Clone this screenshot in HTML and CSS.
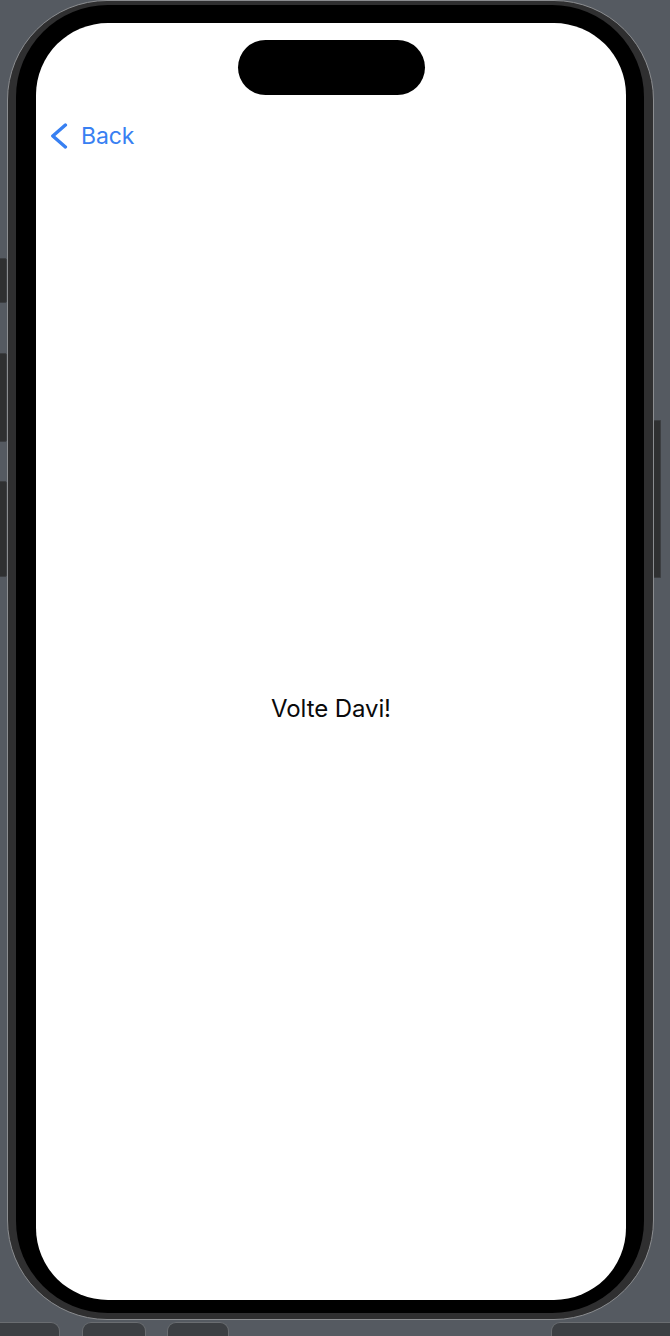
FILE: index.html
```html
<!DOCTYPE html>
<html lang="en">
<head>
<meta charset="utf-8">
<title>Volte Davi</title>
<link rel="stylesheet" href="styles.css">
</head>
<body>
<div class="page">
  <div class="hw hw-left hw-l1"></div>
  <div class="hw hw-left hw-l2"></div>
  <div class="hw hw-left hw-l3"></div>
  <div class="hw hw-right hw-r1"></div>

  <div class="phone">
    <div class="bezel">
      <div class="screen">
        <div class="island"></div>
        <div class="navbar">
          <a class="back" href="#">
            <svg class="chevron" width="18" height="26" viewBox="0 0 18 26" aria-hidden="true">
              <polyline points="15.4,2 2.8,13 15.4,24" fill="none" stroke="#3880f2" stroke-width="3.4" stroke-linecap="round" stroke-linejoin="round"/>
            </svg>
            <span class="back-label">Back</span>
          </a>
        </div>
        <main class="content">
          <p class="message">Volte Davi!</p>
        </main>
      </div>
    </div>
  </div>

  <div class="dock">
    <div class="dock-item dock-a"></div>
    <div class="dock-item dock-b"></div>
    <div class="dock-item dock-c"></div>
    <div class="dock-item dock-d"></div>
  </div>
</div>
</body>
</html>
```

FILE: styles.css
```css
* {
  box-sizing: border-box;
}

html, body {
  margin: 0;
  padding: 0;
}

body {
  background: #555a61;
  font-family: Inter, "Liberation Sans", sans-serif;
}

.page {
  position: relative;
  width: 670px;
  height: 1336px;
  overflow: hidden;
  background: #555a61;
  display: flex;
  flex-direction: column;
}

/* hardware side buttons */
.hw {
  position: absolute;
  background: #2f3031;
  border: 1px solid #3c3e41;
}
.hw-left {
  left: -2px;
  width: 9px;
  border-radius: 0 2px 2px 0;
}
.hw-l1 { top: 258px; height: 45px; }
.hw-l2 { top: 353px; height: 89px; }
.hw-l3 { top: 481px; height: 96px; }
.hw-right {
  left: 653px;
  width: 8px;
  border-radius: 2px 0 0 2px;
}
.hw-r1 { top: 420px; height: 158px; }

/* phone body */
.phone {
  position: relative;
  margin-left: 7px;
  width: 647px;
  height: 1320px;
  flex: none;
  border: 1px solid #8b8d90;
  border-radius: 100px;
  background: #2f2f30;
  padding: 4px 9px 6px 8px;
}

.bezel {
  height: 100%;
  background: #000;
  border-radius: 92px;
  padding: 18px 18px 13px 20px;
}

.screen {
  height: 100%;
  background: #fff;
  border-radius: 72px;
  display: flex;
  flex-direction: column;
  overflow: hidden;
}

.island {
  align-self: center;
  margin-top: 17px;
  width: 187px;
  height: 55px;
  border-radius: 28px;
  background: #000;
  flex: none;
}

.navbar {
  margin-top: 27px;
  height: 28px;
  padding-left: 14px;
  display: flex;
  align-items: center;
  flex: none;
}

.back {
  display: flex;
  align-items: center;
  gap: 13px;
  color: #3880f2;
  text-decoration: none;
}

.chevron {
  display: block;
  flex: none;
}

.back-label {
  font-size: 23px;
  line-height: 28px;
  letter-spacing: -0.1px;
}

.content {
  flex: 1;
  display: flex;
  justify-content: center;
}

.message {
  margin: 544px 0 0;
  font-size: 24px;
  line-height: 30px;
  color: #0a0a0a;
  letter-spacing: -0.1px;
}

/* simulator toolbar strip at bottom */
.dock {
  margin-top: 2px;
  display: flex;
  flex: 1;
}

.dock-item {
  background: #3c3f43;
  border: 1px solid #6a6d71;
  border-bottom: none;
  border-radius: 9px 9px 0 0;
  height: 20px;
}

.dock-a { margin-left: -12px; width: 72px; }
.dock-b { margin-left: 22px; width: 64px; }
.dock-c { margin-left: 21px; width: 62px; }
.dock-d { margin-left: auto; width: 130px; margin-right: -11px; }
```
